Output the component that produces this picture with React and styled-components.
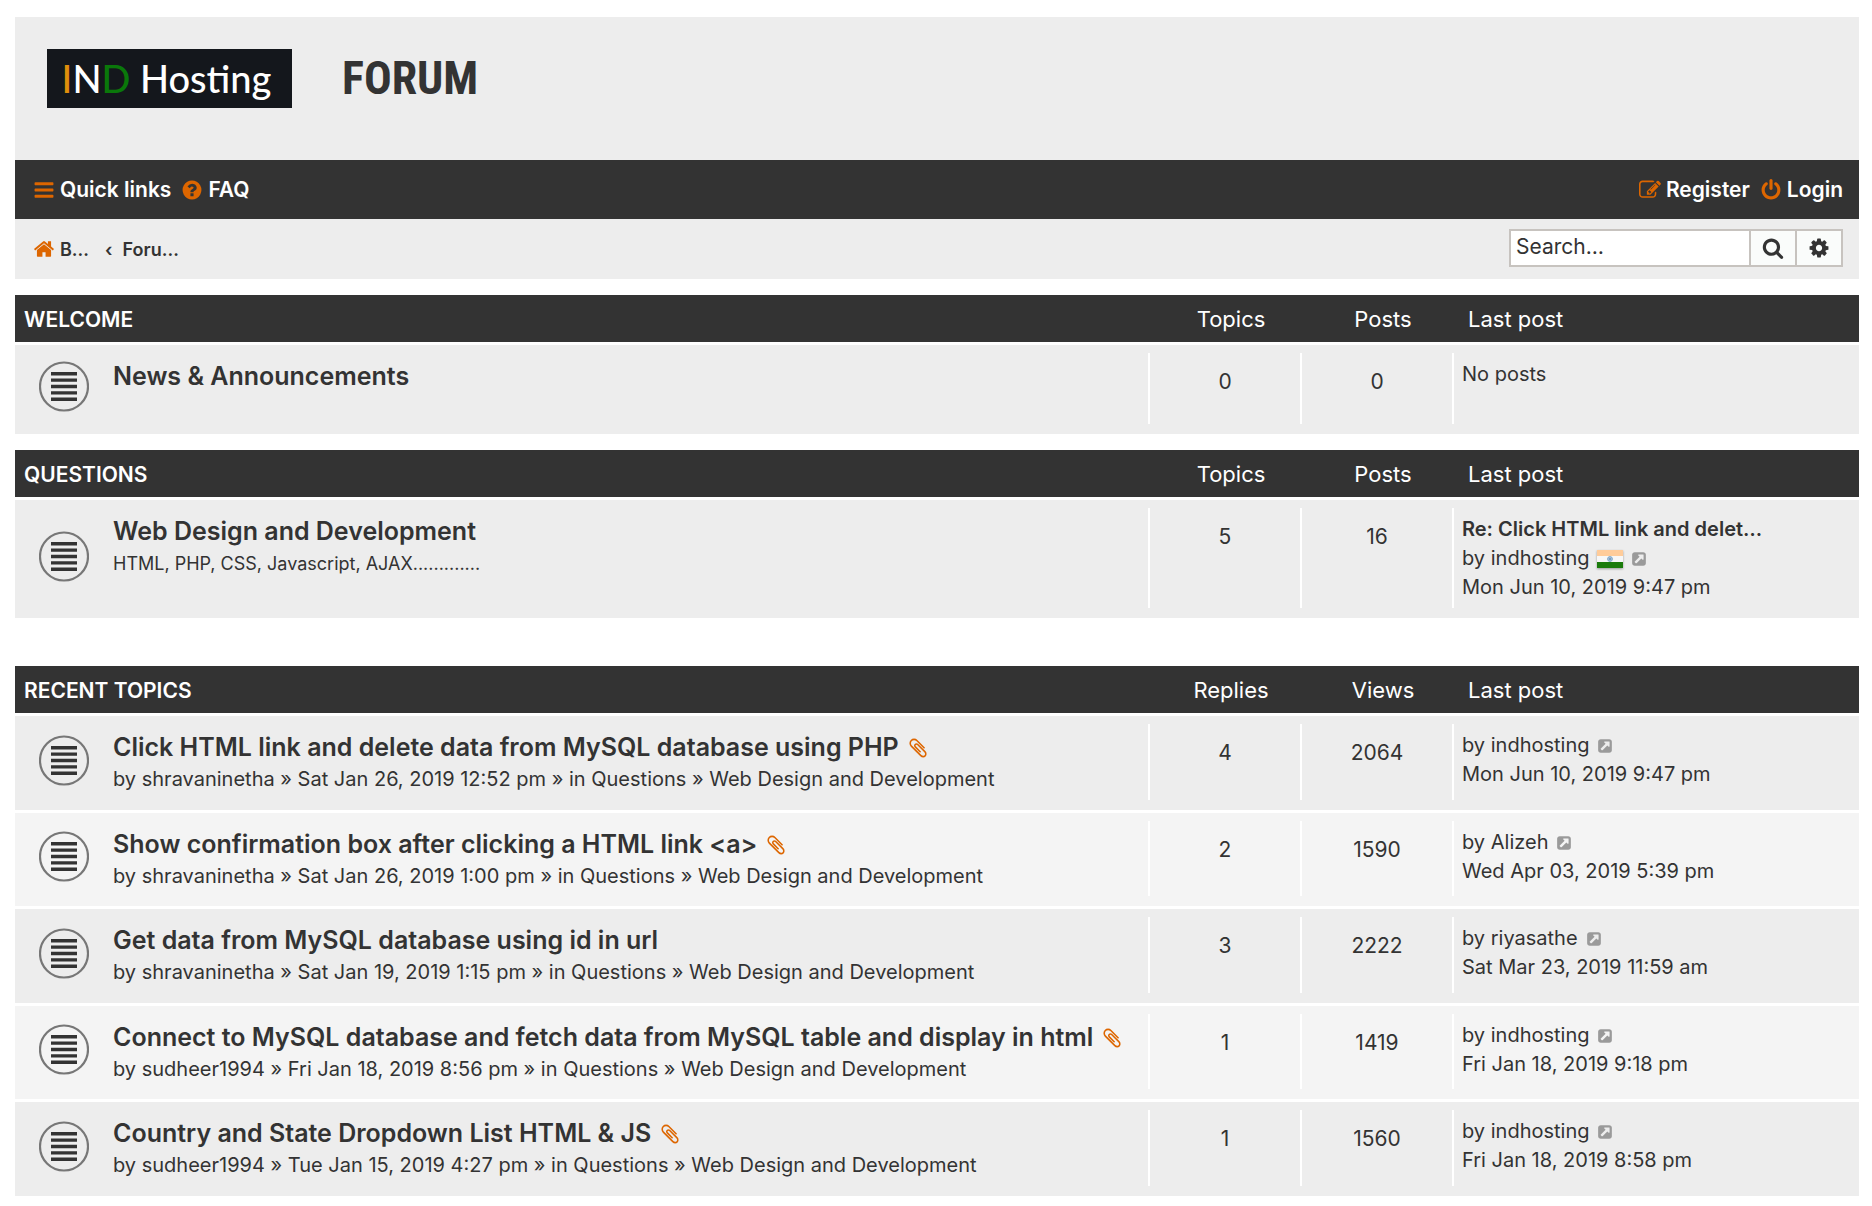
import React from 'react';
import styled, { createGlobalStyle, ThemeProvider } from 'styled-components';

const theme = {
  colors: {
    dark: '#333333',
    panel: '#ededed',
    panelAlt: '#f4f4f4',
    accent: '#dd6600',
    border: '#c7c3bf',
    muted: '#9a9a9a',
  },
  fontSizes: {
    title: '25px',
    label: '22px',
    heading: '21px',
    body: '20px',
    small: '18px',
  },
};

const GlobalStyle = createGlobalStyle`
  * {
    box-sizing: border-box;
  }
  body {
    margin: 0;
    background: #fff;
    color: #333;
    font-family: Inter, "Open Sans", sans-serif;
    font-size: 20px;
  }
  a {
    color: inherit;
    text-decoration: none;
  }
  a:hover {
    text-decoration: underline;
  }
`;

const paths = {
  bars: 'M1664 1344v128q0 26-19 45t-45 19h-1408q-26 0-45-19t-19-45v-128q0-26 19-45t45-19h1408q26 0 45 19t19 45zm0-512v128q0 26-19 45t-45 19h-1408q-26 0-45-19t-19-45v-128q0-26 19-45t45-19h1408q26 0 45 19t19 45zm0-512v128q0 26-19 45t-45 19h-1408q-26 0-45-19t-19-45v-128q0-26 19-45t45-19h1408q26 0 45 19t19 45z',
  question: 'M1024 1376v-192q0-14-9-23t-23-9h-192q-14 0-23 9t-9 23v192q0 14 9 23t23 9h192q14 0 23-9t9-23zm256-672q0-88-55.5-163t-138.5-116-170-41q-243 0-371 213-15 24 8 42l132 100q7 6 19 6 16 0 25-12 53-68 86-92 34-24 86-24 48 0 85.5 26t37.5 59q0 38-20 61t-68 45q-63 28-115.5 86.5t-52.5 125.5v36q0 14 9 23t23 9h192q14 0 23-9t9-23q0-19 21.5-49.5t54.5-49.5q32-18 49-28.5t46-35 44.5-48 28-60.5 12.5-81zm384 192q0 209-103 385.5t-279.5 279.5-385.5 103-385.5-103-279.5-279.5-103-385.5 103-385.5 279.5-279.5 385.5-103 385.5 103 279.5 279.5 103 385.5z',
  home: 'M1472 992v480q0 26-19 45t-45 19h-384v-384h-256v384h-384q-26 0-45-19t-19-45v-480q0-1 .5-3t.5-3l575-474 575 474q1 2 1 6zm223-69l-62 74q-8 9-21 11h-3q-13 0-21-7l-692-577-692 577q-12 8-24 7-13-2-21-11l-62-74q-8-10-7-23.5t11-21.5l719-599q32-26 76-26t76 26l244 204v-195q0-14 9-23t23-9h192q14 0 23 9t9 23v408l219 182q10 8 11 21.5t-7 23.5z',
  power: 'M1664 896q0 156-61 298t-164 245-245 164-298 61-298-61-245-164-164-245-61-298q0-182 80.5-343t226.5-270q43-32 95.5-25t83.5 50q32 42 24.5 94.5t-49.5 84.5q-98 74-151.5 181t-53.5 228q0 104 40.5 198.5t109.5 163.5 163.5 109.5 198.5 40.5 198.5-40.5 163.5-109.5 109.5-163.5 40.5-198.5q0-121-53.5-228t-151.5-181q-42-32-49.5-84.5t24.5-94.5q31-43 84-50t95 25q146 109 226.5 270t80.5 343zm-640-768v640q0 52-38 90t-90 38-90-38-38-90v-640q0-52 38-90t90-38 90 38 38 90z',
  search: 'M1216 832q0-185-131.5-316.5t-316.5-131.5-316.5 131.5-131.5 316.5 131.5 316.5 316.5 131.5 316.5-131.5 131.5-316.5zm512 832q0 52-38 90t-90 38q-54 0-90-38l-343-342q-179 124-399 124-143 0-273.5-55.5t-225-150-150-225-55.5-273.5 55.5-273.5 150-225 225-150 273.5-55.5 273.5 55.5 225 150 150 225 55.5 273.5q0 220-124 399l343 343q37 37 37 90z',
  cog: 'M1152 896q0-106-75-181t-181-75-181 75-75 181 75 181 181 75 181-75 75-181zm512-109v222q0 12-8 23t-20 13l-185 28q-19 54-39 91 35 50 107 138 10 12 10 25t-9 23q-27 37-99 108t-94 71q-12 0-26-9l-138-108q-44 23-91 38-16 136-29 186-7 28-36 28h-222q-14 0-24.5-8.5t-11.5-21.5l-28-184q-49-16-90-37l-141 107q-10 9-25 9-14 0-25-11-126-114-165-168-7-10-7-23 0-12 8-23 15-21 51-66.5t54-70.5q-27-50-41-99l-183-27q-13-2-21-12.5t-8-23.5v-222q0-12 8-23t19-13l186-28q14-46 39-92-40-57-107-138-10-12-10-24 0-10 9-23 26-36 98.5-107.5t94.5-71.5q13 0 26 10l138 107q44-23 91-38 16-136 29-186 7-28 36-28h222q14 0 24.5 8.5t11.5 21.5l28 184q49 16 90 37l142-107q9-9 24-9 13 0 25 10 129 119 165 170 7 8 7 22 0 12-8 23-15 21-51 66.5t-54 70.5q26 50 41 98l183 28q13 2 21 12.5t8 23.5z',
  edit: 'M888 1184l116-116-152-152-116 116v56h96v96h56zm440-720q-16-16-33 1l-350 350q-17 17-1 33t33-1l350-350q17-17 1-33zm80 594v190q0 119-84.5 203.5t-203.5 84.5h-832q-119 0-203.5-84.5t-84.5-203.5v-832q0-119 84.5-203.5t203.5-84.5h832q63 0 117 25 15 7 18 23 3 17-9 29l-49 49q-14 14-32 8-23-6-45-6h-832q-66 0-113 47t-47 113v832q0 66 47 113t113 47h832q66 0 113-47t47-113v-126q0-13 9-22l64-64q15-15 35-7t20 29zm-96-738l288 288-672 672h-288v-288zm444 132l-92 92-288-288 92-92q28-28 68-28t68 28l152 152q28 28 28 68t-28 68z',
  paperclip: 'M1596 1385q0 117-79 196t-196 79q-135 0-235-100l-777-776q-113-115-113-271 0-159 110-270t269-111q158 0 273 113l605 606q10 10 10 22 0 16-30.5 46.5t-46.5 30.5q-13 0-23-10l-606-607q-79-77-181-77-106 0-179 75t-73 181q0 105 76 181l776 777q63 63 145 63 64 0 106-42t42-106q0-82-63-145l-581-581q-26-24-60-24-29 0-48 19t-19 48q0 32 25 59l410 410q10 10 10 22 0 16-31 47t-47 31q-12 0-22-10l-410-410q-63-61-63-149 0-82 57-139t139-57q88 0 149 63l581 581q100 98 100 235z',
  external: 'M1408 928v-480q0-26-19-45t-45-19h-480q-42 0-59 39-17 41 14 70l144 144-534 534q-19 19-19 45t19 45l102 102q19 19 45 19t45-19l534-534 144 144q18 19 45 19 12 0 25-5 39-17 39-59zm256-512v960q0 119-84.5 203.5t-203.5 84.5h-960q-119 0-203.5-84.5t-84.5-203.5v-960q0-119 84.5-203.5t203.5-84.5h960q119 0 203.5 84.5t84.5 203.5z',
};

const IconSvg = styled.svg`
  flex: none;
  display: block;
  width: ${({ $size }) => $size}px;
  height: ${({ $size }) => $size}px;
  fill: ${({ theme: { colors }, $color }) => colors[$color]};
`;

const Icon = ({ name, size = 22, color = 'accent' }) => (
  <IconSvg viewBox="0 0 1792 1792" $size={size} $color={color} aria-hidden="true">
    <path d={paths[name]} />
  </IconSvg>
);

const Page = styled.div`
  padding: 17px 13px 0 15px;
`;

const HeaderBar = styled.header`
  display: flex;
  align-items: flex-start;
  gap: 50px;
  height: 143px;
  padding: 32px;
  background: ${({ theme: { colors } }) => colors.panel};
`;

const Logo = styled.a`
  width: 245px;
  height: 59px;
  padding-right: 6px;
  background: #14171c;
  color: #fff;
  font-family: Lato, sans-serif;
  font-size: 38px;
  font-weight: 500;
  line-height: 59px;
  text-align: center;
  white-space: nowrap;
`;

const LogoLetter = styled.span`
  color: ${({ $color }) => $color};
`;

const SiteTitle = styled.h1`
  margin: 0;
  font-family: "Liberation Sans Narrow", "Roboto Condensed", "Liberation Sans", sans-serif;
  font-size: 46px;
  line-height: 59px;
  font-weight: 700;
`;

const NavBar = styled.nav`
  display: flex;
  justify-content: space-between;
  align-items: center;
  height: 59px;
  padding: 0 16px 0 18px;
  background: ${({ theme: { colors } }) => colors.dark};
  color: #fff;
`;

const Crumbs = styled(NavBar)`
  height: 60px;
  background: ${({ theme: { colors } }) => colors.panel};
  color: ${({ theme: { colors } }) => colors.dark};
`;

const NavGroup = styled.div`
  display: flex;
  align-items: center;
  gap: 10px;
`;

const NavLink = styled.a`
  display: flex;
  align-items: center;
  gap: 5px;
  font-size: ${({ theme: { fontSizes } }) => fontSizes.heading};
  font-weight: 600;
`;

const CrumbLink = styled(NavLink)`
  font-size: ${({ theme: { fontSizes } }) => fontSizes.small};
`;

const Separator = styled.span`
  padding-left: 6px;
  font-size: ${({ theme: { fontSizes } }) => fontSizes.small};
  font-weight: 600;
`;

const SearchForm = styled.form`
  display: flex;
  height: 38px;
  margin-bottom: 2px;
  border: 2px solid ${({ theme: { colors } }) => colors.border};
  background: #fff;
`;

const SearchInput = styled.input`
  width: 238px;
  padding: 0 5px 4px;
  border: 0;
  outline: 0;
  background: #fff;
  font-family: inherit;
  font-size: ${({ theme: { fontSizes } }) => fontSizes.heading};
  &::placeholder {
    color: ${({ theme: { colors } }) => colors.dark};
    opacity: 1;
  }
`;

const SearchButton = styled.button`
  display: flex;
  align-items: center;
  justify-content: center;
  width: 46px;
  padding: 0;
  border: 0;
  border-left: 2px solid ${({ theme: { colors } }) => colors.border};
  background: #fafcfb;
  cursor: pointer;
`;

const Forum = styled.table`
  width: 100%;
  margin-top: ${({ $gap }) => $gap}px;
  table-layout: fixed;
  border-collapse: separate;
  border-spacing: 0;
`;

const Col = styled.col`
  width: ${({ $width }) => $width}px;
`;

const HeadCell = styled.th`
  height: 47px;
  padding: ${({ $last }) => ($last ? '1px 0 0 16px' : '1px 0 0 14px')};
  background: ${({ theme: { colors } }) => colors.dark};
  color: #fff;
  font-size: ${({ theme: { fontSizes } }) => fontSizes.label};
  font-weight: 400;
  line-height: 24px;
  text-align: ${({ $last }) => ($last ? 'left' : 'center')};
`;

const HeadTitle = styled(HeadCell)`
  padding: 2px 9px 0;
  font-size: ${({ theme: { fontSizes } }) => fontSizes.heading};
  font-weight: 600;
  text-align: left;
  text-transform: uppercase;
`;

const Row = styled.tr`
  height: ${({ $height, $alt }) => ($alt ? $height - 1 : $height)}px;
  background: ${({ theme: { colors }, $alt }) => ($alt ? colors.panelAlt : colors.panel)};
`;

const Cell = styled.td`
  padding: 17px 0 9px;
  border-top: 3px solid #fff;
  vertical-align: top;
`;

const StatusCell = styled(Cell)`
  padding: 0 0 6px 24px;
  vertical-align: middle;
`;

// white rule on the left that stops short of the row edges
const RuledCell = styled(Cell)`
  background: linear-gradient(#fff, #fff) no-repeat 0 8px / 2px calc(100% - 18px);
`;

const CountCell = styled(RuledCell)`
  padding: 25px 0 9px 2px;
  font-size: ${({ theme: { fontSizes } }) => fontSizes.heading};
  line-height: 24px;
  text-align: center;
`;

const LastPostCell = styled(RuledCell)`
  padding: 15px 10px 9px;
  line-height: 29px;
`;

const StatusSvg = styled.svg`
  display: block;
  width: 50px;
  height: 51px;
`;

const TitleLine = styled.div`
  display: flex;
  align-items: center;
  gap: 8px;
  font-size: ${({ theme: { fontSizes } }) => fontSizes.title};
  font-weight: 600;
  line-height: 29px;
`;

const Detail = styled.div`
  margin-top: 3px;
  font-size: ${({ theme: { fontSizes }, $small }) => ($small ? fontSizes.small : fontSizes.body)};
  line-height: 29px;
`;

const PostTitle = styled.a`
  display: block;
  font-weight: 600;
`;

const Author = styled.div`
  display: flex;
  align-items: center;
  gap: 8px;
`;

const FlagSvg = styled.svg`
  width: 26px;
  height: 18px;
  filter: drop-shadow(0 1px 1px rgba(0, 0, 0, 0.35));
`;

const StatusIcon = () => (
  <StatusSvg viewBox="0 0 50 51" role="img" aria-label="No unread posts">
    <circle cx="25" cy="25.5" r="24" fill="none" stroke="#777" strokeWidth="2.2" />
    <path d="M12 12.7h26M12 19.1h26M12 25.5h26M12 31.9h26M12 38.3h26" stroke="#333" strokeWidth="3.4" />
  </StatusSvg>
);

const Flag = () => (
  <FlagSvg viewBox="0 0 26 18" role="img" aria-label="India">
    <path fill="#ffcc9a" d="M0 0h26v6H0z" />
    <path fill="#f7f7f7" d="M0 6h26v6H0z" />
    <path fill="#1c7c0c" d="M0 12h26v6H0z" />
    <circle cx="13" cy="9" r="2.4" fill="#a9c6dd" stroke="#7fa6c8" />
    <circle cx="13" cy="9" r="0.8" fill="#3f6fa0" />
  </FlagSvg>
);

const LastPost = ({ post }) => {
  if (!post) {
    return <LastPostCell>No posts</LastPostCell>;
  }
  return (
    <LastPostCell>
      {post.title && <PostTitle href="#post">{post.title}</PostTitle>}
      <Author>
        <span>by <a href="#user">{post.author}</a></span>
        {post.flag && <Flag />}
        <a href="#post" aria-label="View the latest post">
          <Icon name="external" size={16} color="muted" />
        </a>
      </Author>
      <div>{post.date}</div>
    </LastPostCell>
  );
};

const ForumTable = ({ title, columns, rows, gap = 16, height }) => (
  <Forum $gap={gap}>
    <colgroup>
      <Col $width={98} />
      <col />
      <Col $width={152} />
      <Col $width={152} />
      <Col $width={407} />
    </colgroup>
    <thead>
      <tr>
        <HeadTitle colSpan={2} scope="col">{title}</HeadTitle>
        <HeadCell scope="col">{columns[0]}</HeadCell>
        <HeadCell scope="col">{columns[1]}</HeadCell>
        <HeadCell scope="col" $last>Last post</HeadCell>
      </tr>
    </thead>
    <tbody>
      {rows.map((row, i) => (
        <Row key={row.title} $height={height} $alt={i % 2 === 1}>
          <StatusCell><StatusIcon /></StatusCell>
          <Cell>
            <TitleLine>
              <a href="#topic">{row.title}</a>
              {row.attachment && <Icon name="paperclip" />}
            </TitleLine>
            {row.description && <Detail $small>{row.description}</Detail>}
            {row.author && (
              <Detail>
                by <a href="#user">{row.author}</a> » {row.date} » in <a href="#questions">Questions</a> » <a href="#web">Web Design and Development</a>
              </Detail>
            )}
          </Cell>
          <CountCell>{row.counts[0]}</CountCell>
          <CountCell>{row.counts[1]}</CountCell>
          <LastPost post={row.last} />
        </Row>
      ))}
    </tbody>
  </Forum>
);

const welcome = [{ title: 'News & Announcements', counts: [0, 0] }];

const questions = [
  {
    title: 'Web Design and Development',
    description: 'HTML, PHP, CSS, Javascript, AJAX.............',
    counts: [5, 16],
    last: { title: 'Re: Click HTML link and delet…', author: 'indhosting', flag: true, date: 'Mon Jun 10, 2019 9:47 pm' },
  },
];

const recent = [
  {
    title: 'Click HTML link and delete data from MySQL database using PHP',
    attachment: true,
    author: 'shravaninetha',
    date: 'Sat Jan 26, 2019 12:52 pm',
    counts: [4, 2064],
    last: { author: 'indhosting', date: 'Mon Jun 10, 2019 9:47 pm' },
  },
  {
    title: 'Show confirmation box after clicking a HTML link <a>',
    attachment: true,
    author: 'shravaninetha',
    date: 'Sat Jan 26, 2019 1:00 pm',
    counts: [2, 1590],
    last: { author: 'Alizeh', date: 'Wed Apr 03, 2019 5:39 pm' },
  },
  {
    title: 'Get data from MySQL database using id in url',
    author: 'shravaninetha',
    date: 'Sat Jan 19, 2019 1:15 pm',
    counts: [3, 2222],
    last: { author: 'riyasathe', date: 'Sat Mar 23, 2019 11:59 am' },
  },
  {
    title: 'Connect to MySQL database and fetch data from MySQL table and display in html',
    attachment: true,
    author: 'sudheer1994',
    date: 'Fri Jan 18, 2019 8:56 pm',
    counts: [1, 1419],
    last: { author: 'indhosting', date: 'Fri Jan 18, 2019 9:18 pm' },
  },
  {
    title: 'Country and State Dropdown List HTML & JS',
    attachment: true,
    author: 'sudheer1994',
    date: 'Tue Jan 15, 2019 4:27 pm',
    counts: [1, 1560],
    last: { author: 'indhosting', date: 'Fri Jan 18, 2019 8:58 pm' },
  },
];

const App = () => (
  <ThemeProvider theme={theme}>
    <GlobalStyle />
    <Page>
      <HeaderBar>
        <Logo href="#home">
          <LogoLetter $color="#e08e0b">I</LogoLetter>N<LogoLetter $color="#0a780a">D</LogoLetter> Hosting
        </Logo>
        <SiteTitle>FORUM</SiteTitle>
      </HeaderBar>
      <NavBar>
        <NavGroup>
          <NavLink href="#quick"><Icon name="bars" />Quick links</NavLink>
          <NavLink href="#faq"><Icon name="question" />FAQ</NavLink>
        </NavGroup>
        <NavGroup>
          <NavLink href="#register"><Icon name="edit" />Register</NavLink>
          <NavLink href="#login"><Icon name="power" />Login</NavLink>
        </NavGroup>
      </NavBar>
      <Crumbs aria-label="Breadcrumbs">
        <NavGroup>
          <CrumbLink href="#board"><Icon name="home" />B…</CrumbLink>
          <Separator>‹</Separator>
          <CrumbLink href="#forum">Foru…</CrumbLink>
        </NavGroup>
        <SearchForm role="search">
          <SearchInput type="search" placeholder="Search…" aria-label="Search" />
          <SearchButton type="submit" aria-label="Search"><Icon name="search" color="dark" /></SearchButton>
          <SearchButton type="button" aria-label="Advanced search"><Icon name="cog" color="dark" /></SearchButton>
        </SearchForm>
      </Crumbs>
      <main>
        <ForumTable title="Welcome" columns={['Topics', 'Posts']} rows={welcome} height={92} />
        <ForumTable title="Questions" columns={['Topics', 'Posts']} rows={questions} height={121} />
        <ForumTable title="Recent topics" columns={['Replies', 'Views']} rows={recent} gap={48} height={97} />
      </main>
    </Page>
  </ThemeProvider>
);

export default App;
